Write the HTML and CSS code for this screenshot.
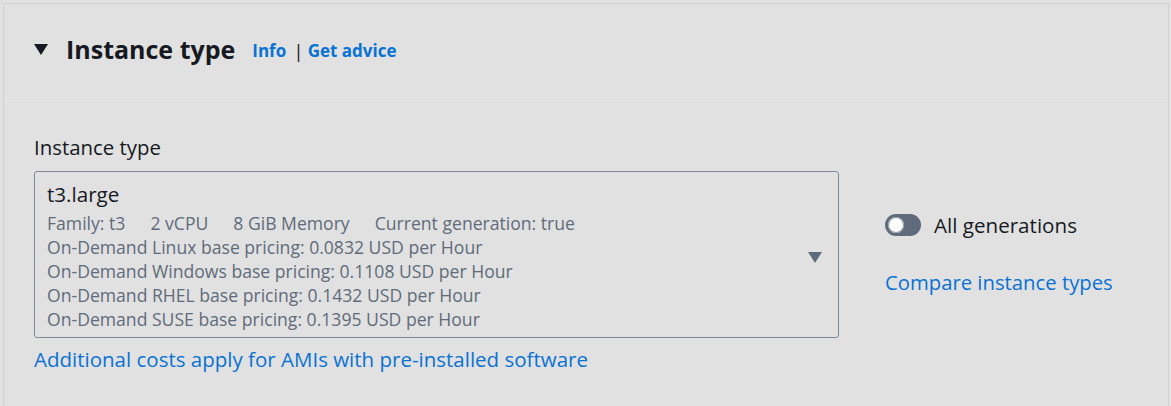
FILE: index.html
```html
<!DOCTYPE html>
<html lang="en">
<head>
<meta charset="utf-8">
<title>Instance type</title>
<link rel="stylesheet" href="styles.css">
</head>
<body>
<div class="page">
  <section class="card">
    <header class="card-header">
      <svg class="expand-icon" width="14" height="11" viewBox="0 0 14 11"><polygon points="0,0 14,0 7,11" fill="#16191f"/></svg>
      <h2 class="title">Instance type</h2>
      <div class="header-links">
        <a class="link bold" href="#">Info</a>
        <span class="sep">|</span>
        <a class="link bold" href="#">Get advice</a>
      </div>
    </header>
    <div class="card-body">
      <div class="main-col">
        <div class="field-label">Instance type</div>
        <div class="select">
          <div class="select-content">
            <div class="option-title">t3.large</div>
            <div class="option-desc">
              <div class="tags"><span class="tag">Family: t3</span><span class="tag">2 vCPU</span><span class="tag">8 GiB Memory</span><span class="tag">Current generation: true</span></div>
              <div>On-Demand Linux base pricing: 0.0832 USD per Hour</div>
              <div>On-Demand Windows base pricing: 0.1108 USD per Hour</div>
              <div>On-Demand RHEL base pricing: 0.1432 USD per Hour</div>
              <div>On-Demand SUSE base pricing: 0.1395 USD per Hour</div>
            </div>
          </div>
          <svg class="caret" width="14" height="11" viewBox="0 0 14 11"><polygon points="0,0 14,0 7,11" fill="#5f6b7a"/></svg>
        </div>
        <a class="link footer-link" href="#">Additional costs apply for AMIs with pre-installed software</a>
      </div>
      <div class="side-col">
        <div class="toggle-row">
          <span class="toggle"><span class="knob"></span></span>
          <span class="toggle-label">All generations</span>
        </div>
        <a class="link compare" href="#">Compare instance types</a>
      </div>
    </div>
  </section>
</div>
</body>
</html>
```
FILE: styles.css
```css
* { box-sizing: border-box; }
html, body {
  margin: 0;
  padding: 0;
  background: #e1e1e1;
  font-family: "Open Sans", "Noto Sans", Arial, sans-serif;
  color: #16191f;
}
.page {
  padding: 3px 2px 0 3px;
  height: 406px;
  overflow: hidden;
}
.card {
  border: 1px solid #d2d2d2;
  border-bottom: none;
  background: #e1e1e1;
  height: 420px;
}
.card-header {
  display: flex;
  align-items: center;
  height: 97px;
  padding-left: 30px;
  padding-bottom: 6px;
  border-bottom: 1px solid #e6e6e6;
}
.expand-icon { flex: none; margin-right: 18px; }
.title {
  margin: 0;
  font-size: 25px;
  font-weight: 700;
  color: #16191f;
}
.header-links {
  display: flex;
  align-items: center;
  margin-left: 17px;
  font-size: 17px;
  padding-top: 3px;
}
.sep { margin: 0 4px 0 7px; color: #16191f; font-size: 19px; }
.link { color: #0972d3; text-decoration: none; }
.bold { font-weight: 700; }
.card-body {
  display: flex;
  padding: 34px 0 0 30px;
}
.main-col { width: 805px; flex: none; }
.field-label {
  font-size: 20.4px;
  line-height: 24px;
  margin-bottom: 12px;
}
.select {
  display: flex;
  align-items: center;
  border: 1px solid #7d8998;
  border-radius: 3px;
  height: 167px;
  padding: 10px 16px 5px 12px;
}
.select-content { flex: 1; align-self: flex-start; }
.option-title { font-size: 20.6px; line-height: 24px; }
.option-desc {
  margin-top: 5px;
  font-size: 17.6px;
  line-height: 24px;
  color: #5f6b7a;
}
.tag { margin-right: 25px; }
.caret { flex: none; }
.footer-link {
  display: block;
  margin-top: 9px;
  font-size: 20.5px;
  line-height: 24px;
}
.side-col {
  margin-left: 46px;
  padding-top: 78px;
  display: flex;
  flex-direction: column;
  align-items: flex-start;
}
.toggle-row {
  display: flex;
  align-items: center;
  height: 24px;
}
.toggle {
  position: relative;
  width: 36px;
  height: 22px;
  border-radius: 11px;
  background: #5f6b7a;
  margin-right: 13px;
}
.knob {
  position: absolute;
  left: 3px;
  top: 3px;
  width: 16px;
  height: 16px;
  border-radius: 50%;
  background: #ffffff;
  box-shadow: 0 0 0 1px #8d96a0 inset;
}
.toggle-label { font-size: 20.6px; line-height: 24px; }
.compare {
  margin-top: 33px;
  font-size: 20.3px;
  line-height: 24px;
}
```
